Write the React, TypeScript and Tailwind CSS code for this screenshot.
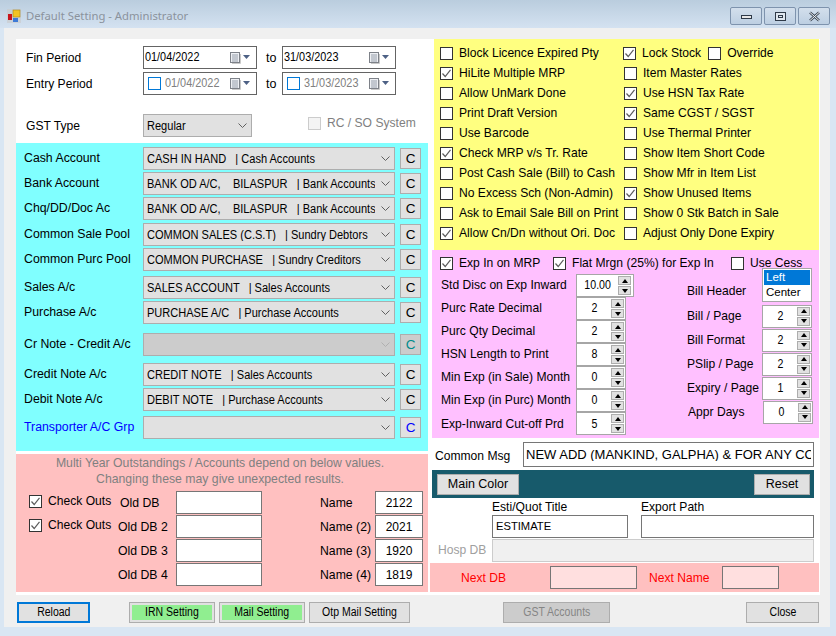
import React from "react";

const Chk = ({ on = false, disabled = false }: { on?: boolean; disabled?: boolean }) => (
  <span className={`flex-none w-[13px] h-[13px] border flex items-center justify-center ${disabled ? "border-[#cccccc] bg-[#f4f4f4]" : "border-[#333333] bg-white"}`}>
    {on && (
      <svg width="11" height="11" viewBox="0 0 11 11" fill="none">
        <path d="M1.5 5.5 L4.2 8.5 L9.5 1.8" stroke="#5c5c5c" strokeWidth="1.2" />
      </svg>
    )}
  </span>
);

const Check = ({ label, on }: { label: string; on?: boolean }) => (
  <div className="flex items-center gap-[6px] whitespace-nowrap">
    <Chk on={on} />
    <span>{label}</span>
  </div>
);

const Chevron = ({ color = "#606060" }: { color?: string }) => (
  <svg width="9" height="5" viewBox="0 0 9 5" fill="none" className="flex-none">
    <path d="M0.5 0.5 L4.5 4.5 L8.5 0.5" stroke={color} strokeWidth="1" />
  </svg>
);

const Cal = () => (
  <svg width="20" height="12" viewBox="0 0 20 12" className="flex-none">
    <rect x="0.5" y="0.5" width="9" height="10" fill="#eef0f4" stroke="#7d8188" />
    <path d="M2 3h6M2 5h6M2 7h6M2 9h6M3 2v8M5 2v8M7 2v8" stroke="#aab0bb" strokeWidth="0.8" />
    <path d="M10.5 2v9.5H2" stroke="#c9c9c9" fill="none" />
    <path d="M13 3h7l-3.5 4z" fill="#4d6185" />
  </svg>
);

const DateBox = ({ value, box }: { value: string; box?: boolean }) => (
  <div className="w-[114px] h-[23px] border border-[#646464] bg-white flex items-center pl-[1px] pr-[6px]">
    {box && <span className="w-[13px] h-[13px] border border-[#0078d7] ml-[3px] mr-[4px] flex-none" />}
    <span className={`flex-1 text-[12.5px] ${box ? "text-[#808080]" : "text-black"}`}>
      <span className="inline-block origin-left scale-x-[0.87]">{value}</span>
    </span>
    <Cal />
  </div>
);

const Acc = ({ mt, label, value, blue, disabled }: { mt: string; label: string; value?: string; blue?: boolean; disabled?: boolean }) => (
  <div className={`flex items-center h-[23px] ${mt}`}>
    <span className={`w-[119px] whitespace-nowrap text-[12.3px] ${blue ? "text-[#0000ff]" : "text-black"}`}>{label}</span>
    <div className={`w-[252px] h-[23px] border border-[#adadad] flex items-center pl-[3px] pr-[4px] ${disabled ? "bg-[#cccccc]" : "bg-[#e1e1e1]"}`}>
      <span className="flex-1 overflow-hidden whitespace-pre text-[12px] mr-[6px]">
        <span className="inline-block origin-left scale-x-[0.92]">{value ?? ""}</span>
      </span>
      <Chevron color={disabled ? "#b0b0b0" : "#606060"} />
    </div>
    <div className={`w-[21px] h-[21px] ml-[5px] border border-[#adadad] flex items-center justify-center text-[13.5px] ${disabled ? "bg-[#cccccc] text-[#008b8b]" : blue ? "bg-[#e1e1e1] text-[#0000ff]" : "bg-[#e1e1e1] text-black"}`}>C</div>
  </div>
);

const Spin = ({ value, w = "w-[50px]", wide }: { value: string; w?: string; wide?: boolean }) => (
  <div className={`${w} h-[23px] border border-[#a6a6a6] bg-white flex items-center pr-[1px]`}>
    <span className="flex-1 text-center pl-[1px] text-[12.5px]">
      <span className="inline-block scale-x-[0.85]">{value}</span>
    </span>
    <div className={`w-[13px] h-[19px] flex flex-col gap-[1px] flex-none ${wide ? "mr-[1px]" : ""}`}>
      <div className="flex-1 bg-[#e1e1e1] border border-[#adadad] flex items-center justify-center">
        <span className="w-0 h-0 border-l-[3px] border-r-[3px] border-b-[4px] border-l-transparent border-r-transparent border-b-black" />
      </div>
      <div className="flex-1 bg-[#e1e1e1] border border-[#adadad] flex items-center justify-center">
        <span className="w-0 h-0 border-l-[3px] border-r-[3px] border-t-[4px] border-l-transparent border-r-transparent border-t-black" />
      </div>
    </div>
  </div>
);

const SpinRow = ({ label, value, h = "h-[23px]", w }: { label: string; value: string; h?: string; w?: string }) => (
  <div className={`flex items-center ${h}`}>
    <span className="w-[136px] pl-[1px] whitespace-nowrap">{label}</span>
    <Spin value={value} w={w} wide={!!w} />
  </div>
);

const RightSpin = ({ label, value }: { label: string; value: string }) => (
  <div className="flex items-center h-[24px]">
    <span className="w-[76px] pl-[1px] whitespace-nowrap">{label}</span>
    <Spin value={value} />
  </div>
);

const Field = ({ w, value, cls = "" }: { w: string; value?: string; cls?: string }) => (
  <div className={`${w} h-[23px] border border-[#767676] bg-white flex items-center px-[3px] whitespace-nowrap overflow-hidden ${cls}`}>{value}</div>
);

const Btn = ({ w, label, cls = "" }: { w: string; label: string; cls?: string }) => (
  <div className={`${w} h-[21px] border border-[#adadad] bg-[#e1e1e1] flex items-center justify-center ${cls}`}>{label}</div>
);

const Narrow = ({ children }: { children: React.ReactNode }) => (
  <span className="inline-block whitespace-nowrap text-[12.5px] scale-x-[0.84]">{children}</span>
);

const GreenBtn = ({ w, label }: { w: string; label: string }) => (
  <div className={`${w} h-[21px] border border-[#adadad] bg-[#e1e1e1] p-[2px]`}>
    <div className="w-full h-full bg-[#90ee90] flex items-center justify-center"><Narrow>{label}</Narrow></div>
  </div>
);

const WinBtn = ({ children }: { children: React.ReactNode }) => (
  <div className="w-[32px] h-[18px] rounded-[2px] border border-[#7e93ad] bg-gradient-to-b from-[#d3dfec] to-[#bdcfe2] flex items-center justify-center">{children}</div>
);

const yellow: [string, boolean, string, boolean][] = [
  ["HiLite Multiple MRP", true, "Item Master Rates", false],
  ["Allow UnMark Done", false, "Use HSN Tax Rate", true],
  ["Print Draft Version", false, "Same CGST / SGST", true],
  ["Use Barcode", false, "Use Thermal Printer", false],
  ["Check MRP v/s Tr. Rate", true, "Show Item Short Code", false],
  ["Post Cash Sale (Bill) to Cash", false, "Show Mfr in Item List", false],
  ["No Excess Sch (Non-Admin)", false, "Show Unused Items", true],
  ["Ask to Email Sale Bill on Print", false, "Show 0 Stk Batch in Sale", false],
  ["Allow Cn/Dn without Ori. Doc", true, "Adjust Only Done Expiry", false],
];

const oldDb = [
  ["Old DB", "2122", "Name"],
  ["Old DB 2", "2021", "Name (2)"],
  ["Old DB 3", "1920", "Name (3)"],
  ["Old DB 4", "1819", "Name (4)"],
];

export default function App() {
  return (
    <div className="w-[836px] h-[636px] bg-[#d9e6f3] overflow-hidden text-[12.1px] leading-none text-black font-['Liberation_Sans',Arial,sans-serif]">
      {/* title bar */}
      <div className="h-[28px] bg-gradient-to-b from-[#bacdde] to-[#d4e2f1] flex items-start pl-[7px] pr-[6px]">
        <svg width="14" height="14" viewBox="0 0 14 14" className="flex-none mt-[9px]">
          <rect x="0" y="0" width="14" height="14" fill="#c9c9c9" opacity="0.6" />
          <rect x="1" y="5" width="4" height="6" fill="#c8141c" />
          <rect x="6" y="1" width="7" height="7" fill="#f2c324" stroke="#a8861a" strokeWidth="0.6" />
          <rect x="6" y="9" width="5" height="4" fill="#3d7ad6" />
        </svg>
        <span className="ml-[5px] mt-[10px] text-[11.3px] text-[#8b939d] font-['Noto_Sans',sans-serif] flex-1">Default Setting - Administrator</span>
        <div className="flex gap-[2px] mt-[7px]">
          <WinBtn><span className="block w-[11px] h-[4px] border border-[#2f3a48] bg-[#e8e8e8] mt-[2px]" /></WinBtn>
          <WinBtn><span className="block w-[11px] h-[9px] border border-[#2f3a48] bg-[#dfe6ee] p-[2px]"><span className="block w-full h-full border border-[#2f3a48]" /></span></WinBtn>
          <WinBtn>
            <svg width="13" height="11" viewBox="0 0 13 11"><path d="M2 1.5 L11 9.5 M11 1.5 L2 9.5" stroke="#3d4856" strokeWidth="2.4" /><path d="M2 1.5 L11 9.5 M11 1.5 L2 9.5" stroke="#f1f3f5" strokeWidth="1" /></svg>
          </WinBtn>
        </div>
      </div>

      {/* client area */}
      <div className="ml-[4px] w-[826px] h-[599px] bg-[#f0f0f0] pt-[11px]">
        <div className="ml-[12px] w-[804px] h-[556px] bg-white flex">
          {/* left column */}
          <div className="w-[412px] flex-none">
            <div className="h-[104px] pl-[10px] pt-[7px]">
              <div className="flex items-center h-[23px]">
                <span className="w-[117px] pt-[2px]">Fin Period</span>
                <DateBox value="01/04/2022" />
                <span className="w-[25px] pl-[9px] pt-[1px] text-[12.5px]">to</span>
                <DateBox value="31/03/2023" />
              </div>
              <div className="flex items-center h-[23px] mt-[3px]">
                <span className="w-[117px] pt-[2px]">Entry Period</span>
                <DateBox value="01/04/2022" box />
                <span className="w-[25px] pl-[9px] pt-[1px] text-[12.5px]">to</span>
                <DateBox value="31/03/2023" box />
              </div>
              <div className="flex items-center h-[23px] mt-[19px]">
                <span className="w-[117px] pt-[2px]">GST Type</span>
                <div className="w-[109px] h-[23px] border border-[#adadad] bg-[#e1e1e1] flex items-center pl-[3px] pr-[4px]">
                  <span className="flex-1 text-[12px]"><span className="inline-block origin-left scale-x-[0.92]">Regular</span></span>
                  <Chevron />
                </div>
                <div className="flex items-center gap-[6px] ml-[56px] mt-[-5px] text-[#808080] whitespace-nowrap">
                  <Chk disabled />
                  <span>RC / SO System</span>
                </div>
              </div>
            </div>
            <div className="h-[308px] bg-[#80ffff] pl-[8px] pt-[4px]">
              <Acc mt="" label="Cash Account" value="CASH IN HAND   | Cash Accounts" />
              <Acc mt="mt-[2px]" label="Bank Account" value="BANK OD A/C,    BILASPUR   | Bank Accounts" />
              <Acc mt="mt-[2px]" label="Chq/DD/Doc Ac" value="BANK OD A/C,    BILASPUR   | Bank Accounts" />
              <Acc mt="mt-[3px]" label="Common Sale Pool" value="COMMON SALES (C.S.T)   | Sundry Debtors" />
              <Acc mt="mt-[2px]" label="Common Purc Pool" value="COMMON PURCHASE   | Sundry Creditors" />
              <Acc mt="mt-[5px]" label="Sales A/c" value="SALES ACCOUNT   | Sales Accounts" />
              <Acc mt="mt-[2px]" label="Purchase A/c" value="PURCHASE A/C   | Purchase Accounts" />
              <Acc mt="mt-[9px]" label="Cr Note - Credit A/c" disabled />
              <Acc mt="mt-[7px]" label="Credit Note A/c" value="CREDIT NOTE   | Sales Accounts" />
              <Acc mt="mt-[2px]" label="Debit Note A/c" value="DEBIT NOTE   | Purchase Accounts" />
              <Acc mt="mt-[5px]" label="Transporter A/C Grp" blue />
            </div>
            <div className="h-[138px] mt-[3px] bg-[#ffc0c0] pt-[1px] text-[12.25px]">
              <div className="w-[408px] pl-[0px] text-center text-[#808080] leading-[16px]">
                <div>Multi Year Outstandings / Accounts depend on below values.</div>
                <div>Changing these may give unexpected results.</div>
              </div>
              <div className="mt-[4px] flex flex-col gap-[1px]">
                {oldDb.map(([db, val, name], i) => (
                  <div key={db} className="flex items-center h-[23px]">
                    <div className="w-[102px] pl-[13px] flex-none">
                      {i < 2 && (
                        <div className="flex items-center gap-[6px] mt-[-3px] whitespace-nowrap text-[12.1px]">
                          <Chk on />
                          <span>Check Outs</span>
                        </div>
                      )}
                    </div>
                    <span className={`w-[58px] pt-[1px] flex-none ${i === 0 ? "pl-[2px]" : ""}`}>{db}</span>
                    <Field w="w-[86px] flex-none" />
                    <span className="w-[55px] ml-[58px] pt-[1px] flex-none">{name}</span>
                    <Field w="w-[48px] flex-none justify-center text-[12px]" value={val} />
                  </div>
                ))}
              </div>
            </div>
          </div>

          {/* right column */}
          <div className="ml-[2px] w-[390px] flex-none">
            <div className="ml-[4px] h-[211px] w-[385px] bg-[#ffff80] pt-[4px] pl-[6px]">
              <div className="flex items-center h-[20px]">
                <div className="w-[183px]"><Check label="Block Licence Expired Pty" /></div>
                <Check label="Lock Stock" on />
                <div className="ml-[7px]"><Check label="Override" /></div>
              </div>
              {yellow.map(([a, aOn, b, bOn]) => (
                <div key={a} className="flex items-center h-[20px]">
                  <div className="w-[184px]"><Check label={a} on={aOn} /></div>
                  <Check label={b} on={bOn} />
                </div>
              ))}
            </div>

            <div className="ml-[2px] w-[387px] h-[188px] bg-[#ffc0ff] pl-[8px] pt-[4px]">
              <div className="flex items-center h-[19px] mb-[1px]">
                <div className="w-[113px]"><Check label="Exp In on MRP" on /></div>
                <div className="w-[178px]"><Check label="Flat Mrgn (25%) for Exp In" on /></div>
                <div><Check label="Use Cess" /></div>
              </div>
              <div className="flex">
                <div className="w-[246px] flex-none">
                  <SpinRow label="Std Disc on Exp Inward" value="10.00" w="w-[58px]" />
                  <SpinRow label="Purc Rate Decimal" value="2" />
                  <SpinRow label="Purc Qty Decimal" value="2" />
                  <SpinRow label="HSN Length to Print" value="8" />
                  <SpinRow label="Min Exp (in Sale) Month" value="0" />
                  <SpinRow label="Min Exp (in Purc) Month" value="0" />
                  <SpinRow label="Exp-Inward Cut-off Prd" value="5" h="h-[23.5px]" />
                </div>
                <div className="flex-none mt-[-6px]">
                  <div className="flex h-[36px]">
                    <span className="w-[76px] pl-[1px] whitespace-nowrap pt-[17px]">Bill Header</span>
                    <div className="w-[50px] h-[34px] border border-[#a6a6a6] bg-white p-[1px] text-[11.5px]">
                      <div className="h-[15px] bg-[#0078d7] text-white pl-[2px] flex items-center">Left</div>
                      <div className="h-[15px] pl-[2px] flex items-center">Center</div>
                    </div>
                  </div>
                  <RightSpin label="Bill / Page" value="2" />
                  <RightSpin label="Bill Format" value="2" />
                  <RightSpin label="PSlip / Page" value="2" />
                  <RightSpin label="Expiry / Page" value="1" />
                  <div className="pl-[1px]"><RightSpin label="Appr Days" value="0" /></div>
                </div>
              </div>
            </div>

            <div className="flex items-center h-[25px] mt-[4px] pl-[5px]">
              <span className="w-[88px] pt-[3px]">Common Msg</span>
              <div className="w-[291px] h-[25px] border border-[#767676] bg-white flex items-center pl-[2px] whitespace-nowrap text-[13px]">
                <span className="block w-[285px] overflow-hidden">NEW ADD (MANKIND, GALPHA) &amp; FOR ANY CONTACT</span>
              </div>
            </div>

            <div className="ml-[2px] w-[382px] h-[28px] mt-[3px] bg-[#175a6b] flex items-center justify-between pl-[5px] pr-[4px] text-[12.5px]">
              <Btn w="w-[82px]" label="Main Color" />
              <Btn w="w-[56px]" label="Reset" />
            </div>

            <div className="flex pl-[62px] h-[40px]">
              <div className="w-[149px]">
                <div className="h-[17px] pt-[3px]">Esti/Quot Title</div>
                <Field w="w-[136px]" value="ESTIMATE" cls="text-[11.2px]" />
              </div>
              <div>
                <div className="h-[17px] pt-[3px]">Export Path</div>
                <Field w="w-[173px]" />
              </div>
            </div>

            <div className="flex items-center h-[23px] mt-[1px] pl-[8px]">
              <span className="w-[54px] text-[#a0a0a0]">Hosp DB</span>
              <div className="w-[322px] h-[23px] border border-[#cccccc] bg-[#f0f0f0]" />
            </div>

            <div className="w-[389px] h-[29px] mt-[1px] bg-[#ffc0c0] flex items-center text-[#ff0000]">
              <span className="w-[120px] pl-[31px] pt-[1px]">Next DB</span>
              <Field w="w-[87px] flex-none !bg-[#ffdfdf]" />
              <span className="w-[85px] pl-[12px] pt-[1px] whitespace-nowrap">Next Name</span>
              <Field w="w-[57px] flex-none !bg-[#ffdfdf]" />
            </div>
          </div>
        </div>

        {/* bottom buttons */}
        <div className="flex items-center h-[21px] mt-[7px] pl-[13px]">
          <div className="w-[73px] h-[21px] border-2 border-[#0078d7] bg-[#e1e1e1] flex items-center justify-center"><Narrow>Reload</Narrow></div>
          <div className="ml-[39px]"><GreenBtn w="w-[86px]" label="IRN Setting" /></div>
          <div className="ml-[4px]"><GreenBtn w="w-[86px]" label="Mail Setting" /></div>
          <div className="ml-[4px] w-[101px] h-[21px] border border-[#adadad] bg-[#e1e1e1] flex items-center justify-center"><Narrow>Otp Mail Setting</Narrow></div>
          <div className="ml-[93px] w-[107px] h-[21px] border border-[#adadad] bg-[#cccccc] text-[#858585] flex items-center justify-center"><Narrow>GST Accounts</Narrow></div>
          <div className="ml-[136px] w-[73px] h-[21px] border border-[#adadad] bg-[#e1e1e1] flex items-center justify-center"><Narrow>Close</Narrow></div>
        </div>
      </div>
    </div>
  );
}
